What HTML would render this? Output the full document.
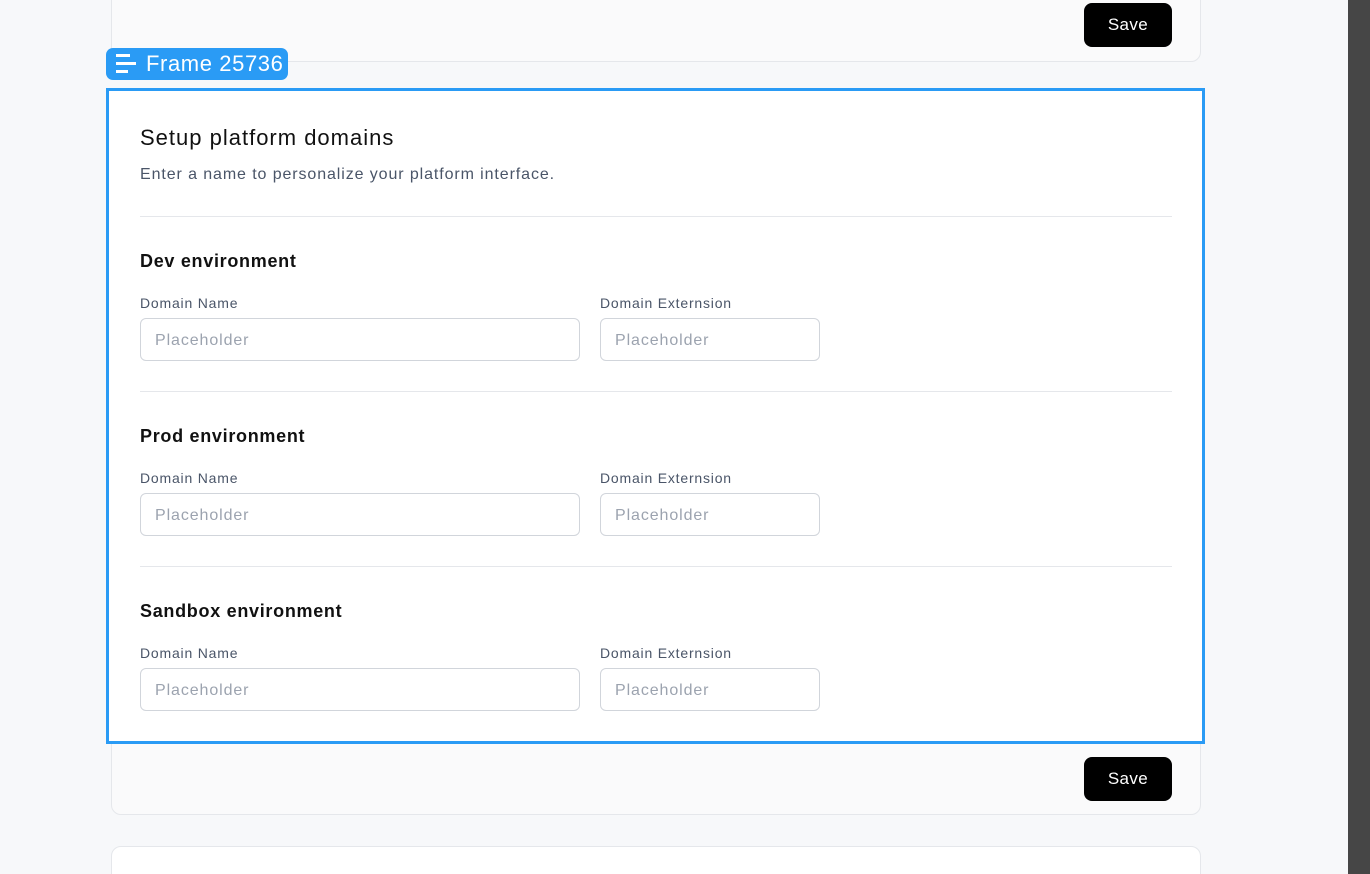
<!DOCTYPE html>
<html><head><meta charset="utf-8"><style>
*{box-sizing:border-box;margin:0;padding:0}
html,body{width:1370px;height:874px;overflow:hidden}
body{background:#f7f8fa;font-family:"Liberation Sans",sans-serif;position:relative}
.bar{position:absolute;left:1348px;top:0;width:22px;height:874px;background:#464646}
.card{position:absolute;left:111px;width:1090px;background:#fafafb;border:1px solid #e5e7eb;border-radius:10px}
.btn{position:absolute;width:88px;height:44px;background:#000;color:#fff;border-radius:8px;font-size:17px;letter-spacing:0.4px;display:flex;align-items:center;justify-content:center}
.frame{position:absolute;left:106px;top:88px;width:1099px;height:656px;border:3px solid #2a9bf5;background:#fff}
.pill{position:absolute;left:106px;top:48px;width:182px;height:32px;background:#2a9bf5;border-radius:7px;color:#fff;font-size:22px;letter-spacing:0.6px;line-height:32px;padding-left:40px}
.pill i{position:absolute;left:10px;height:3px;background:#fff}
.t{position:absolute;left:140px;white-space:nowrap}
.h1{font-size:22px;color:#111;letter-spacing:1px}
.sub{font-size:16px;color:#4a5568;letter-spacing:0.9px}
.h2{font-size:18px;color:#111;font-weight:bold;letter-spacing:0.7px}
.lbl{font-size:14px;color:#4a5568;letter-spacing:0.8px}
.hr{position:absolute;left:140px;width:1032px;height:1px;background:#e5e7eb}
.in{position:absolute;height:43px;border:1px solid #d1d5db;border-radius:6px;font-size:16px;letter-spacing:0.9px;color:#9ca3af;padding-left:14px;line-height:43px}
</style></head><body>
<div class="card" style="top:-20px;height:82px"></div>
<div class="btn" style="left:1084px;top:3px">Save</div>
<div class="card" style="top:89px;height:726px"></div>
<div class="btn" style="left:1084px;top:757px">Save</div>
<div class="card" style="top:846px;height:40px;background:#fff"></div>
<div class="frame"></div>
<div class="pill"><i style="top:6px;width:14px"></i><i style="top:14px;width:20px"></i><i style="top:22px;width:12px"></i>Frame 25736</div>
<div class="t h1" style="top:125px">Setup platform domains</div>
<div class="t sub" style="top:166px">Enter a name to personalize your platform interface.</div>
<div class="hr" style="top:216px"></div>

<div class="t h2" style="top:251px">Dev environment</div>
<div class="t lbl" style="top:295px">Domain Name</div>
<div class="t lbl" style="top:295px;left:600px">Domain Externsion</div>
<div class="in" style="left:140px;top:318px;width:440px">Placeholder</div>
<div class="in" style="left:600px;top:318px;width:220px">Placeholder</div>
<div class="hr" style="top:391px"></div>

<div class="t h2" style="top:426px">Prod environment</div>
<div class="t lbl" style="top:470px">Domain Name</div>
<div class="t lbl" style="top:470px;left:600px">Domain Externsion</div>
<div class="in" style="left:140px;top:493px;width:440px">Placeholder</div>
<div class="in" style="left:600px;top:493px;width:220px">Placeholder</div>
<div class="hr" style="top:566px"></div>

<div class="t h2" style="top:601px">Sandbox environment</div>
<div class="t lbl" style="top:645px">Domain Name</div>
<div class="t lbl" style="top:645px;left:600px">Domain Externsion</div>
<div class="in" style="left:140px;top:668px;width:440px">Placeholder</div>
<div class="in" style="left:600px;top:668px;width:220px">Placeholder</div>
<div class="bar"></div>
</body></html>
